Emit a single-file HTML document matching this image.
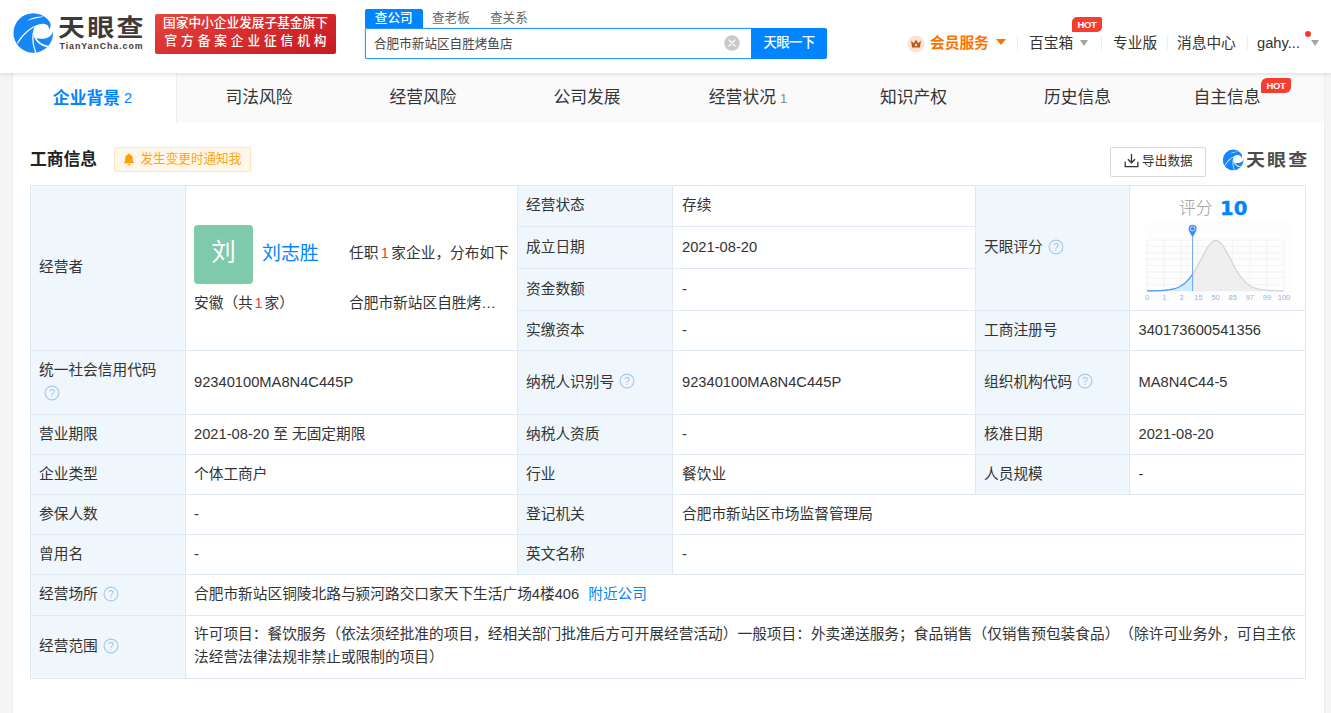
<!DOCTYPE html>
<html lang="zh-CN">
<head>
<meta charset="utf-8">
<title>合肥市新站区自胜烤鱼店 - 天眼查</title>
<style>
*{box-sizing:border-box;margin:0;padding:0}
html,body{width:1331px;height:713px;overflow:hidden}
body{background:#f5f5f5;font-family:"Liberation Sans","Noto Sans CJK SC",sans-serif;color:#333;font-size:14.7px;position:relative}
.abs{position:absolute;white-space:nowrap}
/* header */
#hdr{position:absolute;left:0;top:0;width:1331px;height:73px;background:#fff;box-shadow:0 1px 5px rgba(0,0,0,.13);z-index:5}
#logoTxt{left:58px;top:8px;font-size:27px;font-weight:700;color:#3e3a39;letter-spacing:2.2px;line-height:40px;transform:scaleY(.87);transform-origin:0 50%}
#logoSub{left:59.5px;top:40.3px;font-size:8.8px;font-weight:700;color:#3e3a39;letter-spacing:.95px;line-height:12px;font-family:"Liberation Sans",sans-serif}
#banner{left:155px;top:14px;width:181px;height:40px;background:linear-gradient(160deg,#e6453f 0%,#d62d2e 50%,#c81a20 100%);border-radius:2px;color:#fff;font-weight:500}
#banner div{position:absolute;left:0;width:181px;text-align:center;white-space:nowrap}
#b1{top:0px;font-size:12.7px;line-height:19px;letter-spacing:0}
#b2{top:17.5px;font-size:12.7px;line-height:19px;letter-spacing:3.9px;text-indent:3.9px}
.stab{top:9px;height:19px;line-height:18.5px;font-size:12.6px;color:#666}
#st1{left:365px;width:57.5px;background:#0084ff;color:#fff;font-weight:500;text-align:center;border-radius:2px 2px 0 0}
#st2{left:432px}
#st3{left:490px}
#sbox{left:365px;top:28px;width:387px;height:31px;border:1px solid #2b97ff;border-right:none;background:#fff;box-shadow:0 0 2px rgba(0,132,255,.4);border-radius:2px 0 0 2px}
#stext{left:374px;top:28.6px;height:31px;line-height:31px;font-size:12.6px;color:#444}
#sclear{left:723.7px;top:34.8px;width:16px;height:16px}
#sbtn{left:751px;top:28px;width:76px;height:31px;background:#0084ff;color:#fff;font-size:13.4px;font-weight:500;text-align:center;line-height:29px;border-radius:0 2px 2px 0;letter-spacing:-.7px}
.nav{top:32px;height:22px;line-height:22px;font-size:14.7px;color:#333}
.div{top:36px;width:1px;height:14px;background:#ececec}
.tri{width:0;height:0;border-left:4.5px solid transparent;border-right:4.5px solid transparent;border-top:6px solid #a3a3a3}
.hot{background:#f73d30;color:#fff;font-weight:700;font-size:9.5px;letter-spacing:-.3px;text-align:center;font-family:"Liberation Sans",sans-serif}
/* tabs */
#main{position:absolute;left:12px;top:73px;width:1313px;height:640px;background:#fff;border-left:1px solid #ebebeb;border-right:1px solid #ececec}
#tabs{position:absolute;left:13px;top:73px;width:1311px;height:50px;background:#fafafa}
.tab{position:absolute;top:0;height:50px;line-height:50px;text-align:center;font-size:16.8px;color:#333;white-space:nowrap}
.tab small{font-size:13px;color:#666;margin-left:4px;vertical-align:.5px;font-family:"Liberation Sans",sans-serif}
#t1{background:#fff;color:#0084ff;font-weight:700;border-right:1px solid #efefef}
#t1 small{color:#0084ff;font-weight:400;font-size:14.7px;vertical-align:1px;margin-left:4px}
/* section title */
#ttl{left:30px;top:147px;font-size:16.8px;font-weight:700;color:#222;line-height:26px}
#notice{left:114px;top:147px;width:137px;height:25px;border:1px solid #ffe6c2;background:#fff7ea;border-radius:2px;color:#ffa31a;font-size:12.6px;line-height:23px;padding-left:25.5px;letter-spacing:0}
#export{left:1110px;top:147px;width:96px;height:30px;border:1px solid #d9d9d9;border-radius:2px;background:#fff;font-size:12.6px;color:#333;line-height:27px;padding-left:31px;letter-spacing:.1px}
#wmTxt{left:1246px;top:146.8px;font-size:19px;font-weight:700;color:#4d4d4d;line-height:28px;letter-spacing:2.1px;transform:scaleY(.87);transform-origin:0 50%}

/* table */
.c{position:absolute;border:1px solid #dfe9f3;display:flex;align-items:center;padding:0 8px 2px 8px;font-size:14.7px;color:#333;line-height:22px}
.ci{width:100%}
.q{vertical-align:-2.5px;margin-left:1px}
.lk{color:#0084ff;margin-left:9px}
.sc{display:block;line-height:23px}
body{text-spacing-trim:space-all}
</style>
</head>
<body>
<div id="main"></div>
<div id="hdr">
  <svg class="abs" style="left:12px;top:12px" width="44" height="44" viewBox="0 0 713 713"><circle cx="345" cy="340" r="321" fill="#1687f7"/><g fill="#fff"><path d="M240,140 C320,95 420,70 515,75 C420,92 330,114 240,140 Z"/><path d="M82,500 C150,380 260,270 375,222 L380,240 C270,289 165,399 97,516 Z"/><path d="M375,225 C430,190 520,170 575,215 C598,237 602,265 600,292 C622,262 634,215 618,165 L700,165 L700,318 L664,314 C650,385 570,455 395,425 C440,500 520,530 600,552 L592,572 C500,557 410,522 352,395 C350,380 348,360 350,345 L340,330 C345,290 355,255 375,225 Z"/><path d="M334,332 C317,440 334,560 377,662 L397,656 C353,560 339,440 353,342 Z"/></g></svg>
  <div class="abs" id="logoTxt">天眼查</div>
  <div class="abs" id="logoSub">TianYanCha.com</div>
  <div class="abs" id="banner"><div id="b1">国家中小企业发展子基金旗下</div><div id="b2">官方备案企业征信机构</div></div>

  <div class="abs stab" id="st1">查公司</div>
  <div class="abs stab" id="st2">查老板</div>
  <div class="abs stab" id="st3">查关系</div>
  <div class="abs" id="sbox"></div>
  <div class="abs" id="stext">合肥市新站区自胜烤鱼店</div>
  <svg class="abs" id="sclear" viewBox="0 0 16 16"><circle cx="8" cy="8" r="7.8" fill="#c9c9c9"/><path d="M5 5 L11 11 M11 5 L5 11" stroke="#fff" stroke-width="1.2" stroke-linecap="round"/></svg>
  <div class="abs" id="sbtn">天眼一下</div>

  <svg class="abs" style="left:907px;top:35px" width="18" height="18" viewBox="0 0 18 18"><circle cx="9" cy="9" r="8.5" fill="#fde3cf"/><path d="M4 5.8 L6.9 8.2 L9 4.6 L11.1 8.2 L14 5.8 L12.9 12.6 L5.1 12.6 Z" fill="#b85a20"/><circle cx="9" cy="10" r="1.2" fill="#fde3cf"/></svg>
  <div class="abs nav" style="left:930px;color:#ff7200;font-weight:700">会员服务</div>
  <div class="abs tri" style="left:996px;top:39px;border-top-color:#ff7200;border-left-width:5px;border-right-width:5px"></div>
  <div class="abs div" style="left:1017px"></div>
  <div class="abs nav" style="left:1029px">百宝箱</div>
  <div class="abs tri" style="left:1080px;top:40px"></div>
  <div class="abs hot" style="left:1072px;top:17px;width:30px;height:15px;line-height:15px;border-radius:5px 2px 5px 0">HOT</div>
  <div class="abs div" style="left:1101px"></div>
  <div class="abs nav" style="left:1113px">专业版</div>
  <div class="abs div" style="left:1167px"></div>
  <div class="abs nav" style="left:1177px">消息中心</div>
  <div class="abs div" style="left:1247px"></div>
  <div class="abs nav" style="left:1257px">gahy...</div>
  <div class="abs" style="left:1305px;top:31px;width:6px;height:6px;border-radius:3px;background:#f5382c"></div>
  <div class="abs tri" style="left:1311px;top:40px"></div>
</div>

<div id="tabs">
  <div class="tab" id="t1" style="left:0;width:164px;padding-right:4px">企业背景<small>2</small></div>
  <div class="tab" style="left:164px;width:164px">司法风险</div>
  <div class="tab" style="left:328px;width:164px">经营风险</div>
  <div class="tab" style="left:492px;width:164px">公司发展</div>
  <div class="tab" style="left:653px;width:164px">经营状况<small style="color:#888">1</small></div>
  <div class="tab" style="left:818.5px;width:164px">知识产权</div>
  <div class="tab" style="left:982.5px;width:164px">历史信息</div>
  <div class="tab" style="left:1148px;width:163px;padding-right:31px">自主信息</div>
  <div class="abs hot" style="left:1248px;top:5px;width:30px;height:15px;line-height:15px;border-radius:6px 2px 6px 0">HOT</div>
</div>

<div class="abs" id="ttl">工商信息</div>
<div class="abs" id="notice">发生变更时通知我</div>
<svg class="abs" style="left:123px;top:153px" width="12" height="13" viewBox="0 0 12 13"><path d="M6 0.6 C6.6 0.6 6.9 1 6.9 1.5 C8.8 2 9.8 3.6 9.8 5.6 L9.8 8 L11 9.6 L11 10.2 L1 10.2 L1 9.6 L2.2 8 L2.2 5.6 C2.2 3.6 3.2 2 5.1 1.5 C5.1 1 5.4 0.6 6 0.6 Z" fill="#ff9d0a"/><path d="M4.6 11 L7.4 11 C7.4 11.8 6.8 12.4 6 12.4 C5.2 12.4 4.6 11.8 4.6 11 Z" fill="#ff9d0a"/></svg>
<div class="abs" id="export">导出数据</div>
<svg class="abs" style="left:1123.5px;top:153px" width="15" height="15" viewBox="0 0 15 15" fill="none" stroke="#333" stroke-width="1.3"><path d="M7.5 1 L7.5 9.6 M3.9 6.2 L7.5 9.8 L11.1 6.2 M1.2 8.8 L1.2 13.6 L13.8 13.6 L13.8 8.8"/></svg>
<svg class="abs" style="left:1222.1px;top:148.6px" width="23" height="23" viewBox="0 0 713 713"><circle cx="345" cy="340" r="321" fill="#1687f7"/><g fill="#fff"><path d="M240,140 C320,95 420,70 515,75 C420,92 330,114 240,140 Z"/><path d="M82,500 C150,380 260,270 375,222 L380,240 C270,289 165,399 97,516 Z"/><path d="M375,225 C430,190 520,170 575,215 C598,237 602,265 600,292 C622,262 634,215 618,165 L700,165 L700,318 L664,314 C650,385 570,455 395,425 C440,500 520,530 600,552 L592,572 C500,557 410,522 352,395 C350,380 348,360 350,345 L340,330 C345,290 355,255 375,225 Z"/><path d="M334,332 C317,440 334,560 377,662 L397,656 C353,560 339,440 353,342 Z"/></g></svg>
<div class="abs" id="wmTxt">天眼查</div>

<!--TABLE-->
<div class="c" style="left:30px;top:185px;width:156px;height:166px;background:#f0f7fc;"><div class="ci">经营者</div></div>
<div class="c" style="left:185px;top:185px;width:333px;height:166px;background:#fff;"><div class="ci"></div></div>
<div class="c" style="left:517px;top:185px;width:156px;height:42px;background:#f0f7fc;"><div class="ci">经营状态</div></div>
<div class="c" style="left:672px;top:185px;width:304px;height:42px;background:#fff;padding-left:9px;"><div class="ci">存续</div></div>
<div class="c" style="left:517px;top:226px;width:156px;height:43px;background:#f0f7fc;"><div class="ci">成立日期</div></div>
<div class="c" style="left:672px;top:226px;width:304px;height:43px;background:#fff;padding-left:9px;"><div class="ci">2021-08-20</div></div>
<div class="c" style="left:517px;top:268px;width:156px;height:43px;background:#f0f7fc;"><div class="ci">资金数额</div></div>
<div class="c" style="left:672px;top:268px;width:304px;height:43px;background:#fff;padding-left:9px;"><div class="ci">-</div></div>
<div class="c" style="left:517px;top:310px;width:156px;height:41px;background:#f0f7fc;"><div class="ci">实缴资本</div></div>
<div class="c" style="left:672px;top:310px;width:304px;height:41px;background:#fff;padding-left:9px;"><div class="ci">-</div></div>
<div class="c" style="left:975px;top:185px;width:155px;height:126px;background:#f0f7fc;"><div class="ci">天眼评分 <svg class="q" width="16" height="16" viewBox="0 0 16 16"><circle cx="8" cy="8" r="6.9" fill="none" stroke="#a6c9ec" stroke-width="1.2"/><text x="8" y="11.8" text-anchor="middle" font-size="10.5" fill="#9fc4e6" font-family="Liberation Sans,sans-serif">?</text></svg></div></div>
<div class="c" style="left:1129px;top:185px;width:177px;height:126px;background:#fff;padding-left:8.5px;"><div class="ci"></div></div>
<div class="c" style="left:975px;top:310px;width:155px;height:41px;background:#f0f7fc;"><div class="ci">工商注册号</div></div>
<div class="c" style="left:1129px;top:310px;width:177px;height:41px;background:#fff;padding-left:8.5px;"><div class="ci">340173600541356</div></div>
<div class="c" style="left:30px;top:350px;width:156px;height:65px;background:#f0f7fc;line-height:24px;"><div class="ci">统一社会信用代码<br><span style="margin-left:4px"></span><svg class="q" width="16" height="16" viewBox="0 0 16 16"><circle cx="8" cy="8" r="6.9" fill="none" stroke="#a6c9ec" stroke-width="1.2"/><text x="8" y="11.8" text-anchor="middle" font-size="10.5" fill="#9fc4e6" font-family="Liberation Sans,sans-serif">?</text></svg></div></div>
<div class="c" style="left:185px;top:350px;width:333px;height:65px;background:#fff;"><div class="ci">92340100MA8N4C445P</div></div>
<div class="c" style="left:517px;top:350px;width:156px;height:65px;background:#f0f7fc;"><div class="ci">纳税人识别号 <svg class="q" width="16" height="16" viewBox="0 0 16 16"><circle cx="8" cy="8" r="6.9" fill="none" stroke="#a6c9ec" stroke-width="1.2"/><text x="8" y="11.8" text-anchor="middle" font-size="10.5" fill="#9fc4e6" font-family="Liberation Sans,sans-serif">?</text></svg></div></div>
<div class="c" style="left:672px;top:350px;width:304px;height:65px;background:#fff;padding-left:9px;"><div class="ci">92340100MA8N4C445P</div></div>
<div class="c" style="left:975px;top:350px;width:155px;height:65px;background:#f0f7fc;"><div class="ci">组织机构代码 <svg class="q" width="16" height="16" viewBox="0 0 16 16"><circle cx="8" cy="8" r="6.9" fill="none" stroke="#a6c9ec" stroke-width="1.2"/><text x="8" y="11.8" text-anchor="middle" font-size="10.5" fill="#9fc4e6" font-family="Liberation Sans,sans-serif">?</text></svg></div></div>
<div class="c" style="left:1129px;top:350px;width:177px;height:65px;background:#fff;padding-left:8.5px;"><div class="ci">MA8N4C44-5</div></div>
<div class="c" style="left:30px;top:414px;width:156px;height:41px;background:#f0f7fc;"><div class="ci">营业期限</div></div>
<div class="c" style="left:185px;top:414px;width:333px;height:41px;background:#fff;"><div class="ci">2021-08-20 至 无固定期限</div></div>
<div class="c" style="left:517px;top:414px;width:156px;height:41px;background:#f0f7fc;"><div class="ci">纳税人资质</div></div>
<div class="c" style="left:672px;top:414px;width:304px;height:41px;background:#fff;padding-left:9px;"><div class="ci">-</div></div>
<div class="c" style="left:975px;top:414px;width:155px;height:41px;background:#f0f7fc;"><div class="ci">核准日期</div></div>
<div class="c" style="left:1129px;top:414px;width:177px;height:41px;background:#fff;padding-left:8.5px;"><div class="ci">2021-08-20</div></div>
<div class="c" style="left:30px;top:454px;width:156px;height:41px;background:#f0f7fc;"><div class="ci">企业类型</div></div>
<div class="c" style="left:185px;top:454px;width:333px;height:41px;background:#fff;"><div class="ci">个体工商户</div></div>
<div class="c" style="left:517px;top:454px;width:156px;height:41px;background:#f0f7fc;"><div class="ci">行业</div></div>
<div class="c" style="left:672px;top:454px;width:304px;height:41px;background:#fff;padding-left:9px;"><div class="ci">餐饮业</div></div>
<div class="c" style="left:975px;top:454px;width:155px;height:41px;background:#f0f7fc;"><div class="ci">人员规模</div></div>
<div class="c" style="left:1129px;top:454px;width:177px;height:41px;background:#fff;padding-left:8.5px;"><div class="ci">-</div></div>
<div class="c" style="left:30px;top:494px;width:156px;height:41px;background:#f0f7fc;"><div class="ci">参保人数</div></div>
<div class="c" style="left:185px;top:494px;width:333px;height:41px;background:#fff;"><div class="ci">-</div></div>
<div class="c" style="left:517px;top:494px;width:156px;height:41px;background:#f0f7fc;"><div class="ci">登记机关</div></div>
<div class="c" style="left:672px;top:494px;width:634px;height:41px;background:#fff;padding-left:9px;"><div class="ci">合肥市新站区市场监督管理局</div></div>
<div class="c" style="left:30px;top:534px;width:156px;height:41px;background:#f0f7fc;"><div class="ci">曾用名</div></div>
<div class="c" style="left:185px;top:534px;width:333px;height:41px;background:#fff;"><div class="ci">-</div></div>
<div class="c" style="left:517px;top:534px;width:156px;height:41px;background:#f0f7fc;"><div class="ci">英文名称</div></div>
<div class="c" style="left:672px;top:534px;width:634px;height:41px;background:#fff;padding-left:9px;"><div class="ci">-</div></div>
<div class="c" style="left:30px;top:574px;width:156px;height:42px;background:#f0f7fc;"><div class="ci">经营场所 <svg class="q" width="16" height="16" viewBox="0 0 16 16"><circle cx="8" cy="8" r="6.9" fill="none" stroke="#a6c9ec" stroke-width="1.2"/><text x="8" y="11.8" text-anchor="middle" font-size="10.5" fill="#9fc4e6" font-family="Liberation Sans,sans-serif">?</text></svg></div></div>
<div class="c" style="left:185px;top:574px;width:1121px;height:42px;background:#fff;"><div class="ci">合肥市新站区铜陵北路与颍河路交口家天下生活广场4楼406<span class="lk">附近公司</span></div></div>
<div class="c" style="left:30px;top:615px;width:156px;height:64px;background:#f0f7fc;"><div class="ci">经营范围 <svg class="q" width="16" height="16" viewBox="0 0 16 16"><circle cx="8" cy="8" r="6.9" fill="none" stroke="#a6c9ec" stroke-width="1.2"/><text x="8" y="11.8" text-anchor="middle" font-size="10.5" fill="#9fc4e6" font-family="Liberation Sans,sans-serif">?</text></svg></div></div>
<div class="c" style="left:185px;top:615px;width:1121px;height:64px;background:#fff;"><div class="ci"><span class="sc">许可项目：餐饮服务（依法须经批准的项目，经相关部门批准后方可开展经营活动）一般项目：外卖递送服务；食品销售（仅销售预包装食品）（除许可业务外，可自主依法经营法律法规非禁止或限制的项目）</span></div></div>
<!--/TABLE-->

<!--PERSON-->
<div class="abs" style="left:194px;top:225px;width:59px;height:59px;border-radius:4px;background:#7fc9ac;color:#fff;font-size:24.5px;line-height:56px;text-align:center;font-weight:400">刘</div>
<div class="abs" style="left:262px;top:241px;font-size:18.9px;line-height:26px;color:#0084ff">刘志胜</div>
<div class="abs" style="left:349px;top:242px;font-size:14.7px;line-height:22px">任职<span style="color:#f5382c;margin:0 2.4px">1</span>家企业，分布如下</div>
<div class="abs" style="left:194px;top:292px;font-size:14.7px;line-height:22px">安徽（共<span style="color:#f5382c;margin:0 1.8px">1</span>家）</div>
<div class="abs" style="left:349px;top:292px;font-size:14.7px;line-height:22px">合肥市新站区自胜烤…</div>
<!--/PERSON-->
<!--CHART-->
<div class="abs" style="left:1179px;top:197px;font-size:16.8px;line-height:24px;color:#999;font-weight:300">评分</div>
<div class="abs" style="left:1220px;top:196.5px;font-size:19.6px;line-height:24px;color:#0084ff;font-weight:700;font-family:'DejaVu Sans','Liberation Sans',sans-serif;-webkit-text-stroke:.4px #0084ff">10</div>
<!--CSVG-->
<svg class="abs" style="left:0;top:0" width="1331" height="713" viewBox="0 0 1331 713">
<rect x="1145" y="222" width="147" height="80" fill="#fdfdfd"/>
<path d="M1147.1 240 V291 M1164.2 240 V291 M1181.3 240 V291 M1198.4 240 V291 M1215.5 240 V291 M1232.7 240 V291 M1249.8 240 V291 M1266.9 240 V291 M1284.0 240 V291 M1147.1 240.0 H1284.0 M1147.1 246.4 H1284.0 M1147.1 252.8 H1284.0 M1147.1 259.1 H1284.0 M1147.1 265.5 H1284.0 M1147.1 271.9 H1284.0 M1147.1 278.2 H1284.0 M1147.1 284.6 H1284.0 M1147.1 291.0 H1284.0" stroke="#f0f0f0" stroke-width="0.8" fill="none"/>
<path d="M1147.1 290.9 L1148.6 290.9 L1150.1 290.9 L1151.7 290.8 L1153.2 290.8 L1154.7 290.8 L1156.2 290.7 L1157.7 290.7 L1159.3 290.6 L1160.8 290.6 L1162.3 290.5 L1163.8 290.4 L1165.4 290.2 L1166.9 290.1 L1168.4 289.9 L1169.9 289.7 L1171.4 289.4 L1173.0 289.1 L1174.5 288.7 L1176.0 288.2 L1177.5 287.7 L1179.0 287.0 L1180.6 286.2 L1182.1 285.3 L1183.6 284.2 L1185.1 283.0 L1186.6 281.6 L1188.2 280.0 L1189.7 278.2 L1191.2 276.2 L1192.7 274.1 L1194.3 271.7 L1195.8 269.1 L1197.3 266.4 L1198.8 263.6 L1200.3 260.7 L1201.9 257.8 L1203.4 254.9 L1204.9 252.0 L1206.4 249.4 L1207.9 246.9 L1209.5 244.8 L1211.0 243.0 L1212.5 241.7 L1214.0 240.9 L1215.5 240.5 L1217.1 240.7 L1218.6 241.4 L1220.1 242.5 L1221.6 244.2 L1223.2 246.2 L1224.7 248.5 L1226.2 251.1 L1227.7 253.9 L1229.2 256.8 L1230.8 259.7 L1232.3 262.7 L1233.8 265.5 L1235.3 268.3 L1236.8 270.9 L1238.4 273.3 L1239.9 275.5 L1241.4 277.6 L1242.9 279.4 L1244.5 281.1 L1246.0 282.6 L1247.5 283.9 L1249.0 285.0 L1250.5 285.9 L1252.1 286.8 L1253.6 287.5 L1255.1 288.1 L1256.6 288.6 L1258.1 289.0 L1259.7 289.3 L1261.2 289.6 L1262.7 289.8 L1264.2 290.0 L1265.7 290.2 L1267.3 290.3 L1268.8 290.4 L1270.3 290.5 L1271.8 290.6 L1273.4 290.7 L1274.9 290.7 L1276.4 290.8 L1277.9 290.8 L1279.4 290.8 L1281.0 290.9 L1282.5 290.9 L1284.0 290.9 L1284.0 291.0 L1147.1 291.0 Z" fill="#ececec" fill-opacity="0.85"/>
<path d="M1147.1 290.9 L1148.6 290.9 L1150.1 290.9 L1151.7 290.8 L1153.2 290.8 L1154.7 290.8 L1156.2 290.7 L1157.7 290.7 L1159.3 290.6 L1160.8 290.6 L1162.3 290.5 L1163.8 290.4 L1165.4 290.2 L1166.9 290.1 L1168.4 289.9 L1169.9 289.7 L1171.4 289.4 L1173.0 289.1 L1174.5 288.7 L1176.0 288.2 L1177.5 287.7 L1179.0 287.0 L1180.6 286.2 L1182.1 285.3 L1183.6 284.2 L1185.1 283.0 L1186.6 281.6 L1188.2 280.0 L1189.7 278.2 L1191.2 276.2 L1192.7 274.1 L1194.3 271.7 L1195.8 269.1 L1197.3 266.4 L1198.8 263.6 L1200.3 260.7 L1201.9 257.8 L1203.4 254.9 L1204.9 252.0 L1206.4 249.4 L1207.9 246.9 L1209.5 244.8 L1211.0 243.0 L1212.5 241.7 L1214.0 240.9 L1215.5 240.5 L1217.1 240.7 L1218.6 241.4 L1220.1 242.5 L1221.6 244.2 L1223.2 246.2 L1224.7 248.5 L1226.2 251.1 L1227.7 253.9 L1229.2 256.8 L1230.8 259.7 L1232.3 262.7 L1233.8 265.5 L1235.3 268.3 L1236.8 270.9 L1238.4 273.3 L1239.9 275.5 L1241.4 277.6 L1242.9 279.4 L1244.5 281.1 L1246.0 282.6 L1247.5 283.9 L1249.0 285.0 L1250.5 285.9 L1252.1 286.8 L1253.6 287.5 L1255.1 288.1 L1256.6 288.6 L1258.1 289.0 L1259.7 289.3 L1261.2 289.6 L1262.7 289.8 L1264.2 290.0 L1265.7 290.2 L1267.3 290.3 L1268.8 290.4 L1270.3 290.5 L1271.8 290.6 L1273.4 290.7 L1274.9 290.7 L1276.4 290.8 L1277.9 290.8 L1279.4 290.8 L1281.0 290.9 L1282.5 290.9 L1284.0 290.9" fill="none" stroke="#d4d4d4" stroke-width="1.2"/>
<path d="M1147.1 290.9 L1148.2 290.9 L1149.4 290.9 L1150.5 290.9 L1151.6 290.8 L1152.8 290.8 L1153.9 290.8 L1155.1 290.8 L1156.2 290.7 L1157.3 290.7 L1158.5 290.7 L1159.6 290.6 L1160.8 290.6 L1161.9 290.5 L1163.0 290.4 L1164.2 290.3 L1165.3 290.2 L1166.4 290.1 L1167.6 290.0 L1168.7 289.9 L1169.8 289.7 L1171.0 289.5 L1172.1 289.3 L1173.3 289.0 L1174.4 288.7 L1175.5 288.4 L1176.7 288.0 L1177.8 287.5 L1178.9 287.0 L1180.1 286.5 L1181.2 285.8 L1182.4 285.1 L1183.5 284.3 L1184.6 283.4 L1185.8 282.4 L1186.9 281.3 L1188.0 280.1 L1189.2 278.8 L1190.3 277.4 L1191.5 275.9 L1192.6 274.3 L1192.6 291.0 L1147.1 291.0 Z" fill="#d3edfc"/>
<path d="M1147.1 290.9 L1148.2 290.9 L1149.4 290.9 L1150.5 290.9 L1151.6 290.8 L1152.8 290.8 L1153.9 290.8 L1155.1 290.8 L1156.2 290.7 L1157.3 290.7 L1158.5 290.7 L1159.6 290.6 L1160.8 290.6 L1161.9 290.5 L1163.0 290.4 L1164.2 290.3 L1165.3 290.2 L1166.4 290.1 L1167.6 290.0 L1168.7 289.9 L1169.8 289.7 L1171.0 289.5 L1172.1 289.3 L1173.3 289.0 L1174.4 288.7 L1175.5 288.4 L1176.7 288.0 L1177.8 287.5 L1178.9 287.0 L1180.1 286.5 L1181.2 285.8 L1182.4 285.1 L1183.5 284.3 L1184.6 283.4 L1185.8 282.4 L1186.9 281.3 L1188.0 280.1 L1189.2 278.8 L1190.3 277.4 L1191.5 275.9 L1192.6 274.3" fill="none" stroke="#4d9dff" stroke-width="1.3"/>
<path d="M1192.6 234 V291.0" stroke="#6aa6f7" stroke-width="1"/>
<path d="M1192.6 237 C1191.4 234.5 1188.6 232 1188.6 228.7 A4 4 0 1 1 1196.6 228.7 C1196.6 232 1193.8 234.5 1192.6 237 Z" fill="#3d8df5"/>
<circle cx="1192.6" cy="228.6" r="2.3" fill="none" stroke="#cfe3fd" stroke-width="0.9"/>
<g font-family="Liberation Sans,sans-serif" font-size="7.4" fill="#8db6ee" text-anchor="middle"><text x="1147.1" y="300.4">0</text><text x="1164.2" y="300.4">1</text><text x="1181.3" y="300.4">3</text><text x="1198.4" y="300.4">15</text><text x="1215.5" y="300.4">50</text><text x="1232.7" y="300.4">85</text><text x="1249.8" y="300.4">97</text><text x="1266.9" y="300.4">99</text><text x="1284.0" y="300.4">100</text></g>
</svg>
<!--/CSVG-->
<!--/CHART-->
</body>
</html>
